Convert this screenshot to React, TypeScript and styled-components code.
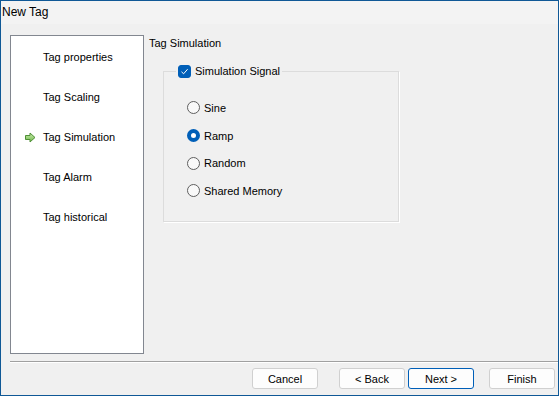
import React, {useState} from 'react';
import styled, {createGlobalStyle} from 'styled-components';

const GlobalStyle = createGlobalStyle`
    html, body {
        margin: 0;
        padding: 0;
        background: #f0f0f0;
    }
`;

const steps = ['Tag properties', 'Tag Scaling', 'Tag Simulation', 'Tag Alarm', 'Tag historical'];
const signals = ['Sine', 'Ramp', 'Random', 'Shared Memory'];

const NavArrow = () => (
    <svg width="12" height="11" viewBox="0 0 12 11">
        <defs>
            <linearGradient id="arrowFill" x1="0" y1="0" x2="0" y2="1">
                <stop offset="0" stopColor="#c9ecae"/>
                <stop offset="1" stopColor="#6fb84a"/>
            </linearGradient>
        </defs>
        <path d="M1.5 3.5 H6 V1 L11 5.5 L6 10 V7.5 H1.5 Z" fill="url(#arrowFill)" stroke="#4f8f36" strokeWidth="1"
              strokeLinejoin="round"/>
    </svg>
);

const App = () => {
    const [signal, setSignal] = useState('Ramp');
    const [enabled, setEnabled] = useState(true);
    const active = 'Tag Simulation';

    return (
        <>
            <GlobalStyle/>
            <Window>
                <TitleBar>New Tag</TitleBar>
                <Body>
                    <StepList>
                        {steps.map(step => (
                            <StepItem key={step}>
                                <Marker>{step === active && <NavArrow/>}</Marker>
                                {step}
                            </StepItem>
                        ))}
                    </StepList>
                    <Content>
                        <PageTitle>Tag Simulation</PageTitle>
                        <Group>
                            <Legend onClick={() => setEnabled(!enabled)}>
                                <CheckBox $checked={enabled}>
                                    {enabled && (
                                        <svg width="9" height="9" viewBox="0 0 9 9">
                                            <path d="M1.5 4.8 L3.6 6.8 L7.6 2.2" fill="none" stroke="#fff"
                                                  strokeWidth="1"/>
                                        </svg>
                                    )}
                                </CheckBox>
                                Simulation Signal
                            </Legend>
                            <RadioList>
                                {signals.map(s => (
                                    <RadioRow key={s} onClick={() => setSignal(s)}>
                                        <Radio $checked={signal === s}/>
                                        {s}
                                    </RadioRow>
                                ))}
                            </RadioList>
                        </Group>
                    </Content>
                </Body>
                <Separator/>
                <ButtonRow>
                    <Button>Cancel</Button>
                    <Spacer $w={21}/>
                    <Button>&lt; Back</Button>
                    <Spacer $w={3}/>
                    <Button $primary>Next &gt;</Button>
                    <Spacer $w={15}/>
                    <Button>Finish</Button>
                </ButtonRow>
            </Window>
        </>
    );
};

export default App;

const Window = styled.div`
    box-sizing: border-box;
    width: 559px;
    height: 396px;
    border: 1px solid #0f5896;
    background: #f0f0f0;
    display: flex;
    flex-direction: column;
    font-family: "Liberation Sans", Arial, sans-serif;
    font-size: 11px;
    color: #000;
`;

const TitleBar = styled.div`
    height: 23px;
    line-height: 23px;
    padding-left: 1px;
    background: #f3f3f3;
    font-size: 12px;
    color: #000;
`;

const Body = styled.div`
    display: flex;
    align-items: flex-start;
    padding: 11px 0 0 9px;
`;

const StepList = styled.div`
    box-sizing: border-box;
    width: 134px;
    height: 319px;
    background: #fff;
    border: 1px solid #828790;
    padding-top: 1px;
`;

const StepItem = styled.div`
    display: flex;
    align-items: center;
    height: 40px;
    padding-left: 13px;
`;

const Marker = styled.span`
    display: flex;
    align-items: center;
    width: 19px;
`;

const Content = styled.div`
    display: flex;
    flex-direction: column;
    margin-left: 5px;
`;

const PageTitle = styled.div`
    height: 16px;
    line-height: 16px;
`;

const Group = styled.fieldset`
    box-sizing: border-box;
    width: 236px;
    height: 159px;
    margin: 12px 0 0 14px;
    padding: 0;
    border: 1px solid #dcdcdc;
    box-shadow: 1px 1px 0 #fff;
`;

const Legend = styled.legend`
    display: flex;
    align-items: center;
    gap: 4px;
    margin-left: 12px;
    padding: 0 2px;
    height: 16px;
    cursor: default;
`;

const CheckBox = styled.span<{ $checked: boolean }>`
    box-sizing: border-box;
    width: 13px;
    height: 13px;
    border-radius: 3px;
    display: flex;
    align-items: center;
    justify-content: center;
    background: ${props => props.$checked ? '#005fb8' : '#fff'};
    border: 1px solid ${props => props.$checked ? '#005fb8' : '#5a5a5a'};
`;

const RadioList = styled.div`
    display: flex;
    flex-direction: column;
    padding: 15px 0 0 23px;
`;

const RadioRow = styled.div`
    display: flex;
    align-items: center;
    gap: 4px;
    height: 27.7px;
    cursor: default;
`;

const Radio = styled.span<{ $checked: boolean }>`
    box-sizing: border-box;
    width: 13px;
    height: 13px;
    border-radius: 50%;
    background: ${props => props.$checked ? '#fff' : '#f9f9f9'};
    border: ${props => props.$checked ? '4px solid #005fb8' : '1px solid #5f5f5f'};
`;

const Separator = styled.div`
    margin: 7px 0 0 9px;
    height: 1px;
    background: #a0a0a0;
    border-bottom: 1px solid #fff;
`;

const ButtonRow = styled.div`
    display: flex;
    justify-content: flex-end;
    padding: 5px 3px 0 0;
`;

const Spacer = styled.span<{ $w: number }>`
    width: ${props => props.$w}px;
`;

const Button = styled.button<{ $primary?: boolean }>`
    box-sizing: border-box;
    width: 66px;
    height: 21px;
    padding: 0;
    background: #fdfdfd;
    border: 1px solid ${props => props.$primary ? '#005fb8' : '#d0d0d0'};
    border-radius: 3px;
    font-family: "Liberation Sans", Arial, sans-serif;
    font-size: 11px;
    color: #000;
`;
